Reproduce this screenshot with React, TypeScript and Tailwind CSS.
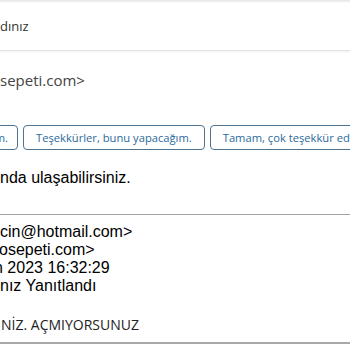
import React from 'react'

const SEGOE = "font-['Open_Sans','Noto_Sans',sans-serif]"
const ARIAL = "font-['Liberation_Sans',Arial,sans-serif]"

const REPLIES = ['Anladım.', 'Teşekkürler, bunu yapacağım.', 'Tamam, çok teşekkür ederim.']

function ReplyButton({ label, first }: { label: string; first?: boolean }) {
  return (
    <button
      className={
        'h-[25px] shrink-0 rounded-[4px] border border-[#4d7391] bg-white text-[11.2px] leading-none text-[#2b6a9c] whitespace-nowrap ' +
        (first ? 'w-[80px] -ml-[62px] pl-3 pr-[9px] text-right' : 'px-3')
      }
    >
      {label}
    </button>
  )
}

export default function App() {
  return (
    <div className={`w-[350px] h-[350px] overflow-hidden bg-white ${SEGOE}`}>
      {/* top edge shadow */}
      <div className="h-[3px] bg-gradient-to-b from-[#e4e4e4] to-white" />

      {/* conversation header */}
      <div className="h-[48px] flex items-center border-b border-[#e3e3e3] shadow-[0_1px_2px_rgba(0,0,0,0.06)]">
        <span className="text-[13px] text-[#333]">dınız</span>
      </div>

      {/* sender */}
      <div className="pt-[19px] text-[15px] leading-[20px] text-[#444]">sepeti.com&gt;</div>

      {/* suggested replies */}
      <div className="mt-[35px] flex gap-[5px]">
        {REPLIES.map((r, i) => (
          <ReplyButton key={r} label={r} first={i === 0} />
        ))}
      </div>

      {/* body */}
      <div className={`${ARIAL} text-[16px] leading-[18px] text-black`}>
        <p className="mt-[19px]">nda ulaşabilirsiniz.</p>

        <div className="mt-[27px] h-px bg-[#a3a3a3]" />

        <div className="mt-[8px]">
          <p>cin@hotmail.com&gt;</p>
          <p className="-ml-[1px]">osepeti.com&gt;</p>
          <p className="-ml-[6px]">n 2023 16:32:29</p>
          <p>nız Yanıtlandı</p>
        </div>
      </div>

      <p className="mt-[20px] ml-[1px] text-[14px] leading-[20px] text-[#222]">NİZ. AÇMIYORSUNUZ</p>

      <div className="mt-[7px] h-[2px] bg-[#a8a8a8]" />
    </div>
  )
}
